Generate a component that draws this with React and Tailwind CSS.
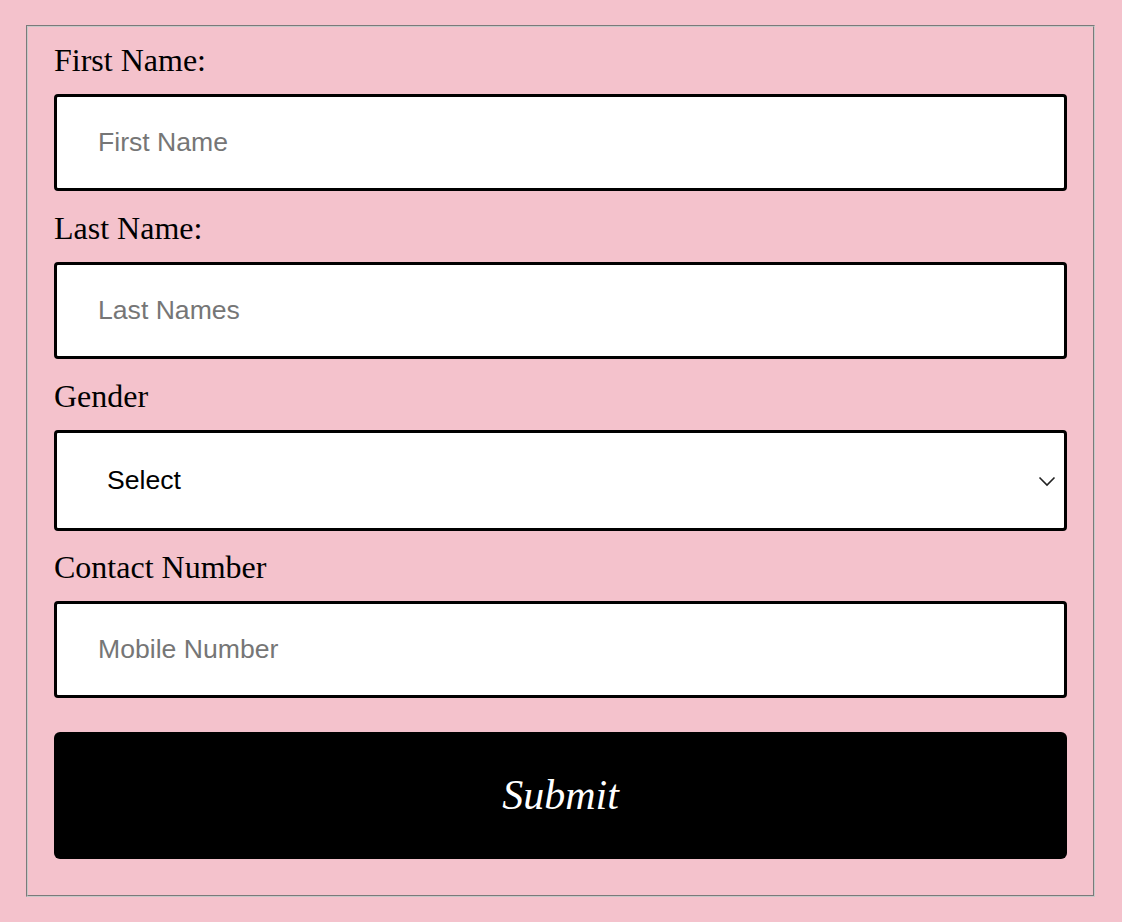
import React from 'react';

const labelClass =
  "block text-[32px] leading-[37px] text-black font-['Liberation_Serif','Times_New_Roman',serif]";

const inputClass =
  "mt-[15px] block w-full h-[97px] bg-white border-[3px] border-black rounded-[4px] pl-[41px] pr-4 text-[26.6px] text-black placeholder:text-[#767676] outline-none font-['Liberation_Sans',Arial,sans-serif]";

const App = () => {
  return (
    <div className="min-h-screen bg-[#f4c2cc] pt-[25px] pl-[26px] pr-[27px] pb-[25px]">
      {/* groove frame, drawn as two 1px borders */}
      <div className="border border-t-[#7a7a7a] border-l-[#7a7a7a] border-b-[#c8c8c8] border-r-[#c8c8c8]">
        <form
          className="border border-t-[#c8c8c8] border-l-[#c8c8c8] border-b-[#7a7a7a] border-r-[#7a7a7a] px-[26px] pt-[15px] pb-[36px]"
          onSubmit={(e) => e.preventDefault()}
        >
          {/* First name */}
          <label className={labelClass}>First Name:</label>
          <input type="text" placeholder="First Name" className={inputClass} />

          {/* Last name */}
          <label className={`${labelClass} mt-[19px]`}>Last Name:</label>
          <input type="text" placeholder="Last Names" className={inputClass} />

          {/* Gender */}
          <label className={`${labelClass} mt-[19px]`}>Gender</label>
          <div className="relative mt-[15px]">
            <select
              defaultValue=""
              className="block w-full h-[101px] appearance-none bg-white border-[3px] border-black rounded-[4px] pl-[50px] pr-12 text-[26.6px] text-black outline-none font-['Liberation_Sans',Arial,sans-serif]"
            >
              <option value="">Select</option>
              <option value="male">Male</option>
              <option value="female">Female</option>
            </select>
            <svg
              className="absolute right-[11px] top-[46px] pointer-events-none"
              width="18"
              height="11"
              viewBox="0 0 18 11"
              fill="none"
            >
              <path d="M1.5 1.5 L9 9 L16.5 1.5" stroke="#222" strokeWidth="1.6" />
            </svg>
          </div>

          {/* Contact number */}
          <label className={`${labelClass} mt-[18px]`}>Contact Number</label>
          <input type="tel" placeholder="Mobile Number" className={inputClass} />

          <button
            type="submit"
            className="mt-[34px] block w-full h-[127px] bg-black text-white rounded-[6px] text-[42px] italic font-['Liberation_Serif','Times_New_Roman',cursive]"
          >
            Submit
          </button>
        </form>
      </div>
    </div>
  );
};

export default App;
